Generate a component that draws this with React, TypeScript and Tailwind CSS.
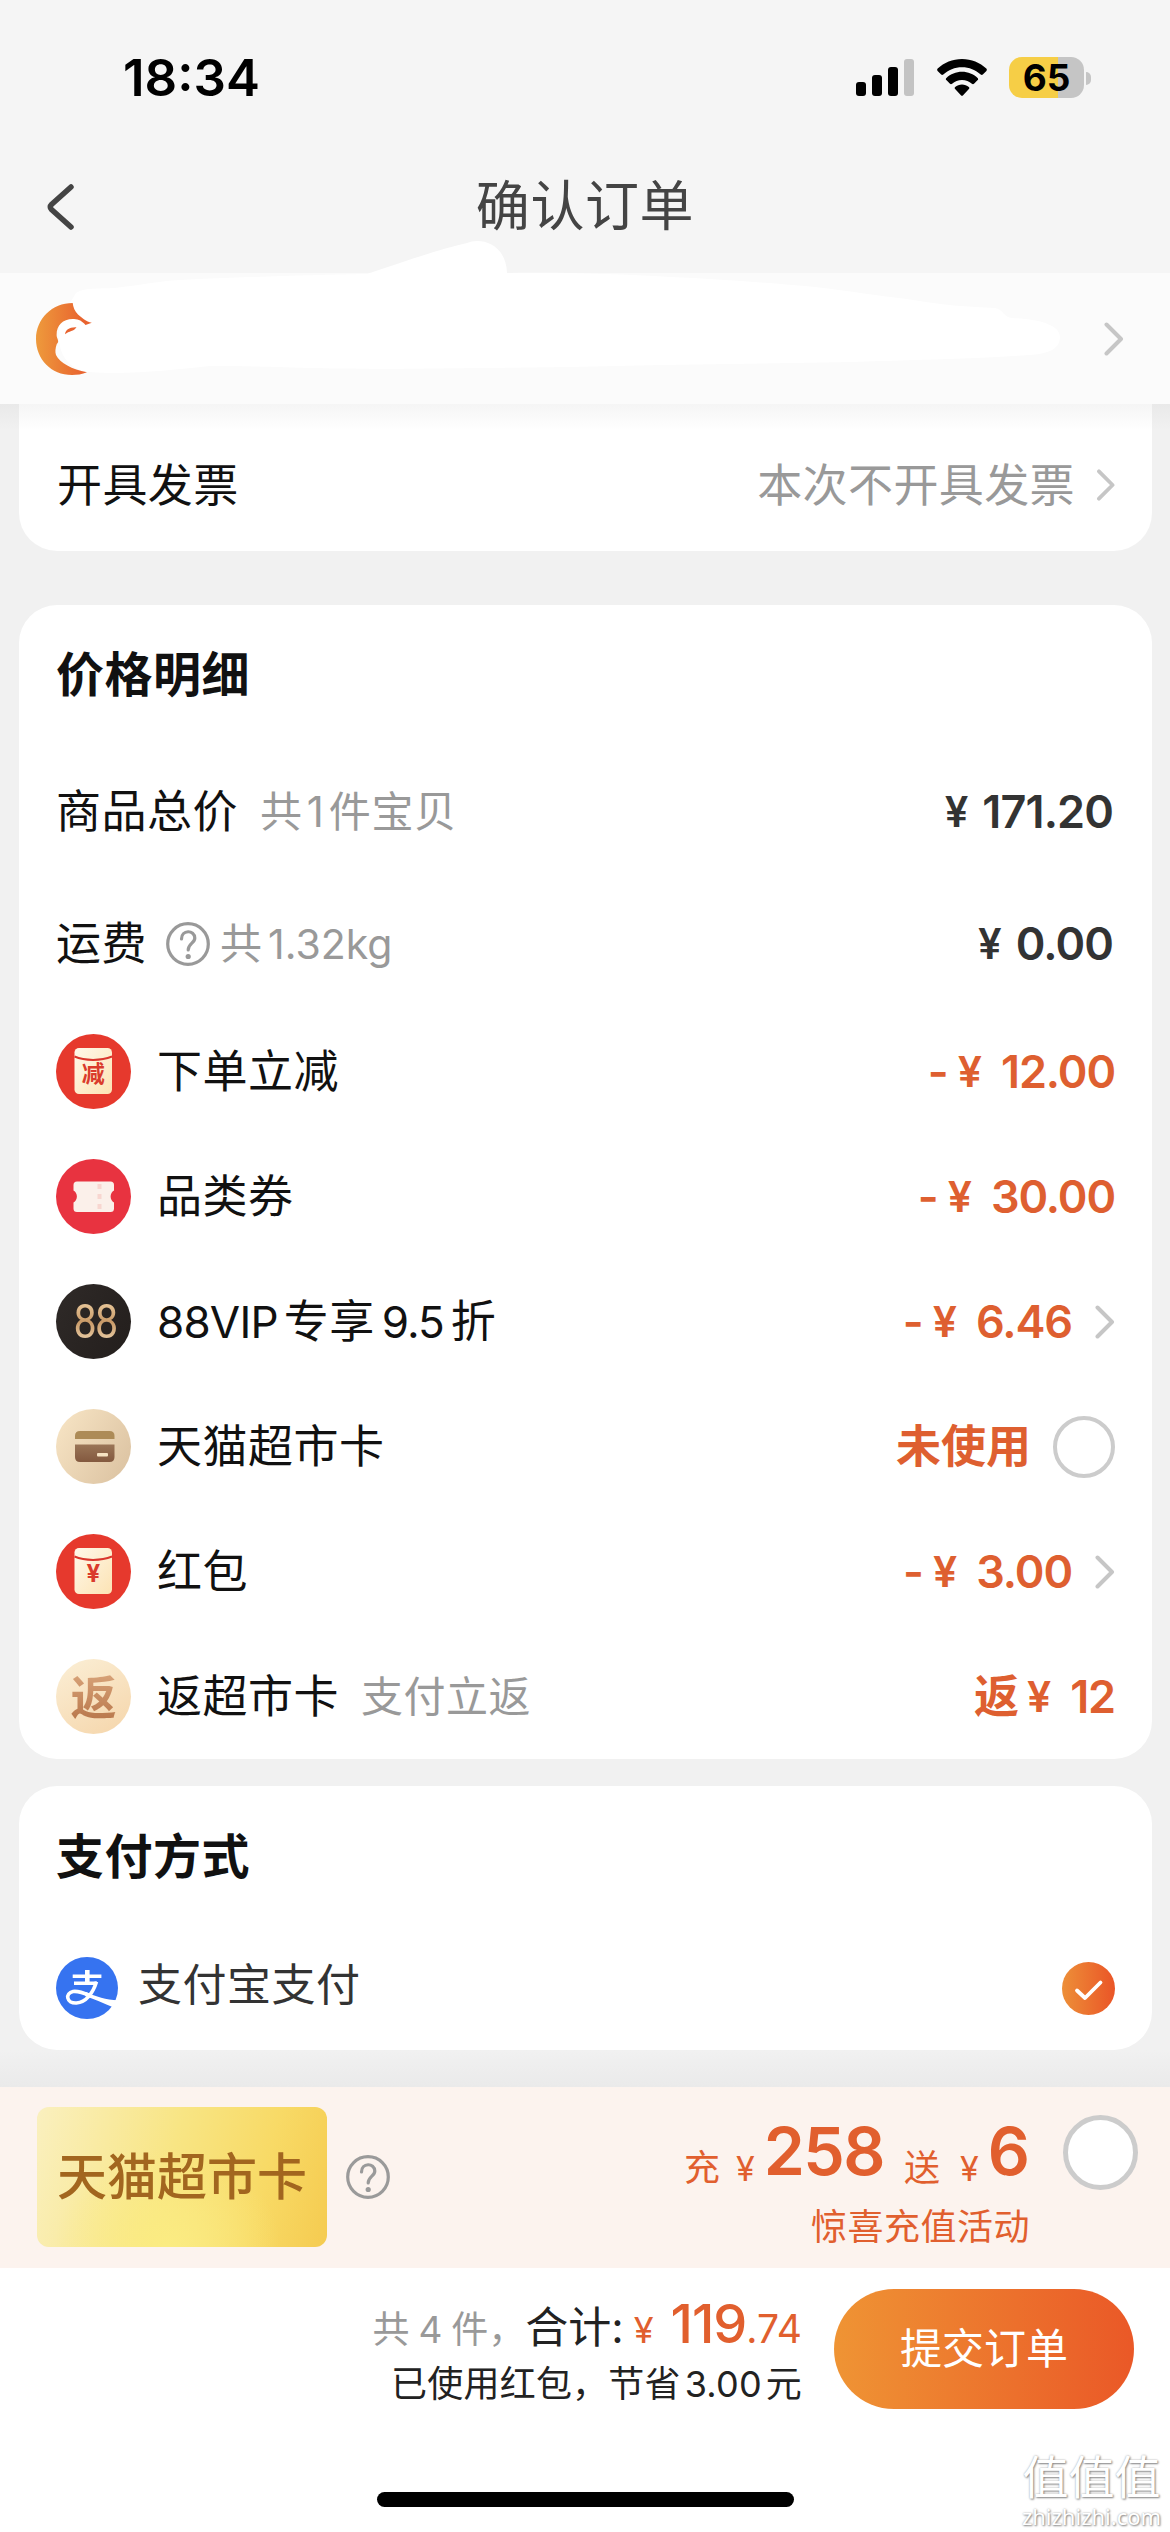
import type { ReactNode } from 'react';

function Chevron({ className = '' }: { className?: string }) {
  return (
    <svg viewBox="0 0 20 34" fill="none" className={className}>
      <path
        d="M2.5 2.5 L17 17 L2.5 31.5"
        stroke="currentColor"
        strokeWidth="4"
        strokeLinecap="round"
        strokeLinejoin="round"
      />
    </svg>
  );
}

function HelpIcon({ className = '' }: { className?: string }) {
  return (
    <svg viewBox="0 0 44 44" fill="none" className={`size-11 ${className}`}>
      <circle cx="22" cy="22" r="20.3" stroke="currentColor" strokeWidth="3.2" />
      <path
        d="M15.5 17 C15.5 7.5 28.5 7.5 28.8 16 C29 21 22.2 21.5 22.2 28"
        stroke="currentColor"
        strokeWidth="3.2"
        strokeLinecap="round"
      />
      <circle cx="22.2" cy="34.5" r="2.6" fill="currentColor" />
    </svg>
  );
}

function StatusBar() {
  return (
    <div className="flex h-[146px] items-start justify-between pt-[50px] pr-[79px] pl-[123px] text-black">
      <span className="mt-px text-[51px] leading-[54px] font-semibold">18:34</span>
      <div className="flex items-start pt-[7px]">
        <svg viewBox="0 0 58 38" className="mt-0.5 h-[38px] w-[58px]">
          <rect x="0" y="23" width="10" height="14" rx="3" />
          <rect x="16" y="16" width="10" height="21" rx="3" />
          <rect x="32" y="8" width="10" height="29" rx="3" />
          <rect x="48" y="0" width="10" height="37" rx="3" fill="#c3c3c3" />
        </svg>
        <svg viewBox="0 0 50 37" className="mt-0.5 ml-[23px] h-[37px] w-[50px]">
          <path d="M25 0 C34.5 0 43 3.6 49.3 9.6 C50 10.3 50 11.2 49.4 11.9 L45.8 15.5 C45.2 16.1 44.4 16.1 43.7 15.5 C38.7 10.9 32.2 8.2 25 8.2 C17.8 8.2 11.3 10.9 6.3 15.5 C5.6 16.1 4.8 16.1 4.2 15.5 L0.6 11.9 C0 11.2 0 10.3 0.7 9.6 C7 3.6 15.5 0 25 0 Z" />
          <path d="M25 12.8 C31 12.8 36.5 15.1 40.6 18.9 C41.3 19.6 41.3 20.4 40.7 21.1 L37 24.7 C36.4 25.3 35.6 25.3 34.9 24.7 C32.3 22.4 28.8 21 25 21 C21.2 21 17.7 22.4 15.1 24.7 C14.4 25.3 13.6 25.3 13 24.7 L9.3 21.1 C8.7 20.4 8.7 19.6 9.4 18.9 C13.5 15.1 19 12.8 25 12.8 Z" />
          <path d="M25 25.4 C27.6 25.4 30 26.4 31.8 28 C32.5 28.6 32.5 29.5 31.9 30.1 L26.1 36.2 C25.5 36.9 24.5 36.9 23.9 36.2 L18.1 30.1 C17.5 29.5 17.5 28.6 18.2 28 C20 26.4 22.4 25.4 25 25.4 Z" />
        </svg>
        <div className="ml-[22px] flex h-[41px] w-[75px] items-center justify-center rounded-[13px] bg-[linear-gradient(90deg,#f6ce46_65%,#c5c5c5_65%)] text-[37px] leading-none font-bold">
          65
        </div>
        <span className="mt-[15px] ml-0.5 h-[13px] w-[5px] rounded-r-full bg-[#c5c5c5]" />
      </div>
    </div>
  );
}

function AddressBar() {
  return (
    <div className="relative flex h-[131px] items-center justify-between bg-[#fbfbfb] pr-[46px] pl-9">
      <svg viewBox="0 0 72 72" className="relative z-10 size-[72px]">
        <defs>
          <linearGradient id="logo" x1="0" y1="0" x2="1" y2="0">
            <stop offset="0" stopColor="#ee9a3c" />
            <stop offset="0.85" stopColor="#e8632f" />
          </linearGradient>
        </defs>
        <path
          d="M36.7 0 C37 4 39 8.5 42 11.5 C46 15 50 18.5 55.8 19.7 L49.5 22 C46 18 43 16.3 38 16 C27 15.5 20.5 22 20.6 32 C20.7 36 24 38 20.8 41 C19.3 45 19 49 20 52 C24 60 36 66.5 51 69.3 C46 71.5 41 72 36 72 C15 72 0 56 0 36 C0 16 16 0 36.7 0 Z"
          fill="url(#logo)"
        />
        <path d="M29 31.3 C29.5 27 33 24 40.5 24.3 C38 28.5 33 28 29 31.3 Z" fill="#e8632f" />
      </svg>
      {/* blanked-out address */}
      <svg viewBox="0 0 1170 164" className="absolute -top-[34px] left-0 h-[164px] w-[1170px]">
        <path
          d="M76 54 C85 48 100 50 115 49 C140 46 160 42 180 41 C240 38 310 36 367 35 C400 24 440 10 467 4 C480 -2 506 4 507 34 C560 33 620 35 670 38 C720 40 770 44 815 48 C850 52 880 57 907 60 C940 66 970 68 995 69 C1003 70 1004 79 1012 79 C1040 80 1060 86 1060 98 C1060 110 1048 115 1029 116 C970 120 910 121 853 123 L662 126 L570 128 L383 130 C320 130 260 127 210 127 C170 131 130 136 88 133 C60 128 56 104 60 80 Z"
          fill="#fff"
        />
      </svg>
      <Chevron className="h-[36px] w-[20px] text-[#c6c6c6]" />
    </div>
  );
}

function Envelope({ mark, size }: { mark: string; size: number }) {
  return (
    <svg viewBox="0 0 75 75" className="size-[75px]">
      <defs>
        <linearGradient id="paper" x1="0" y1="0" x2="1" y2="1">
          <stop offset="0" stopColor="#fff8ea" />
          <stop offset="1" stopColor="#fce3b4" />
        </linearGradient>
      </defs>
      <circle cx="37.5" cy="37.5" r="37.5" fill="#e6392d" />
      <rect x="18.5" y="14" width="37.5" height="46" rx="4.5" fill="url(#paper)" />
      <path d="M18.5 22.5 C29 27 45 27 56 22.5" stroke="#d9352c" strokeWidth="2" fill="none" />
      <text x="37.3" y={39 + size * 0.38} textAnchor="middle" fontSize={size} fontWeight="700" fill="#da3b2c">
        {mark}
      </text>
    </svg>
  );
}

function TicketIcon() {
  return (
    <svg viewBox="0 0 75 75" className="size-[75px]">
      <circle cx="37.5" cy="37.5" r="37.5" fill="#e83340" />
      <path
        d="M21 22.5 H54.5 Q58 22.5 58 26 V31.5 A7 7 0 0 0 58 43.5 V49.5 Q58 53 54.5 53 H21 Q17.5 53 17.5 49.5 V43.5 A7 7 0 0 0 17.5 31.5 V26 Q17.5 22.5 21 22.5 Z"
        fill="#fbf0ea"
      />
      <path d="M43.5 25 V52" stroke="#f8d6d0" strokeWidth="4" strokeDasharray="5 5" />
    </svg>
  );
}

function CardIcon() {
  return (
    <svg viewBox="0 0 75 75" className="size-[75px]">
      <defs>
        <linearGradient id="sand" x1="0" y1="0.2" x2="1" y2="0.8">
          <stop offset="0" stopColor="#f6e3c3" />
          <stop offset="1" stopColor="#dcc3a2" />
        </linearGradient>
        <linearGradient id="cocoa" x1="0" y1="0" x2="0" y2="1">
          <stop offset="0" stopColor="#9a7557" />
          <stop offset="1" stopColor="#83593f" />
        </linearGradient>
      </defs>
      <circle cx="37.5" cy="37.5" r="37.5" fill="url(#sand)" />
      <path d="M19 30 V27 Q19 22 24 22 H53.5 Q58.5 22 58.5 27 V30 Z" fill="#ad8b57" />
      <path d="M19 35.5 H58.5 V48 Q58.5 53 53.5 53 H24 Q19 53 19 48 Z" fill="url(#cocoa)" />
      <rect x="41" y="44" width="11" height="3.5" rx="1" fill="#f6e3c3" />
    </svg>
  );
}

function AlipayIcon() {
  return (
    <svg viewBox="0 0 62 62" fill="none" className="size-[62px]">
      <circle cx="31" cy="31" r="31" fill="#3673f0" />
      <path d="M16.7 19.3 H45.4 M18 26.3 H41" stroke="#fff" strokeWidth="3.6" />
      <path d="M31.3 13 V26" stroke="#fff" strokeWidth="4.6" />
      <path
        d="M40.5 24.8 C37 36 30 45.5 20.5 46 C10 46.5 9 36 17 34.5 C22 33.5 28 36 34 38.5"
        stroke="#fff"
        strokeWidth="3.6"
      />
      <path d="M30 35 C40 39.5 50 43 62 43.3 L62 46 L56.5 50 C48 46.5 38 42 29 39 Z" fill="#fff" />
    </svg>
  );
}

function Price({ children }: { children: ReactNode }) {
  return (
    <span className="ml-auto flex items-center text-[45px] leading-none font-semibold text-[#333]">
      <span className="mr-[14px] text-[42px]">¥</span>
      <span className="tracking-[-0.9px]">{children}</span>
    </span>
  );
}

function Amount({ children, prefix }: { children: ReactNode; prefix?: string }) {
  return (
    <span className="flex items-center text-[45px] leading-none font-semibold text-[#de5f30]">
      {prefix === '-' && <span className="mr-[9px]">-</span>}
      {prefix && prefix !== '-' && <span className="mr-2">{prefix}</span>}
      <span className="mr-[19px] text-[43px]">¥</span>
      <span className="tracking-[-1.1px]">{children}</span>
    </span>
  );
}

function Row({ icon, label, note, children }: { icon: ReactNode; label: ReactNode; note?: string; children: ReactNode }) {
  return (
    <div className="flex h-[125px] items-center">
      {icon}
      <span className="ml-[26px] text-[45px] tracking-[0.5px] text-[#111]">{label}</span>
      {note && <span className="ml-[22px] text-[42px] tracking-[0.5px] text-[#999]">{note}</span>}
      <div className="ml-auto flex items-center">{children}</div>
    </div>
  );
}

export default function App() {
  return (
    <div className="relative flex h-[2532px] w-[1170px] flex-col overflow-hidden bg-[#f1f1f1] font-['Inter','Noto_Sans_CJK_SC',sans-serif] leading-none">
      <header className="h-[273px] shrink-0 bg-[#f5f5f5]">
        <StatusBar />
        <div className="flex h-[122px] items-center pr-[74px] pl-[46px]">
          <svg viewBox="0 0 28 46" fill="none" className="h-[46px] w-[28px]">
            <path d="M25 3 L5.5 20.5 Q3 23 5.5 25.5 L25 43" stroke="#444" strokeWidth="5.5" strokeLinecap="round" />
          </svg>
          <h1 className="flex-1 text-center text-[54px] tracking-[0.6px] text-[#444]">确认订单</h1>
        </div>
      </header>

      <AddressBar />

      <main className="flex flex-col bg-[linear-gradient(180deg,#e9e9e9_0px,#f1f1f1_26px)] pr-[18px] pl-[19px]">
        <section className="flex h-[147px] items-center rounded-b-[38px] bg-[linear-gradient(180deg,#f5f5f5_0px,#fff_26px)] pt-[15px] pr-[36px] pl-[38px] text-[45px] tracking-[0.4px]">
          <span className="text-[#111]">开具发票</span>
          <span className="ml-auto text-[#999]">本次不开具发票</span>
          <Chevron className="ml-[21px] h-[32px] w-[20px] text-[#c6c6c6]" />
        </section>

        <section className="mt-[54px] h-[1154px] rounded-[38px] bg-white px-[37px]">
          <h2 className="flex h-[140px] items-center text-[48px] font-bold tracking-[0.5px] text-[#111]">价格明细</h2>
          <div className="flex h-[133px] items-center pr-0.5">
            <span className="text-[45px] tracking-[0.5px] text-[#111]">商品总价</span>
            <span className="ml-[22px] text-[42px] tracking-[0.8px] text-[#999]">
              共<span className="mx-1">1</span>件宝贝
            </span>
            <Price>171.20</Price>
          </div>
          <div className="flex h-[131px] items-center pr-0.5">
            <span className="text-[45px] tracking-[0.5px] text-[#111]">运费</span>
            <HelpIcon className="ml-[19px] text-[#999]" />
            <span className="ml-2.5 text-[42px] text-[#999]">
              共<span className="ml-1.5 text-[41px]">1.32kg</span>
            </span>
            <Price>0.00</Price>
          </div>

          <Row icon={<Envelope mark="减" size={23} />} label="下单立减">
            <Amount prefix="-">12.00</Amount>
          </Row>
          <Row icon={<TicketIcon />} label="品类券">
            <Amount prefix="-">30.00</Amount>
          </Row>
          <Row
            icon={
              <div className="flex size-[75px] items-center justify-center rounded-full bg-[linear-gradient(120deg,#2f2a28,#231e1c)] font-['Roboto'] text-[48px] tracking-[-2px]">
                <span className="-mr-0.5 inline-block scale-x-[0.86] bg-[linear-gradient(180deg,#f0d2a6,#c99a68_50%,#f3dcb8)] bg-clip-text text-transparent">
                  88
                </span>
              </div>
            }
            label={
              <>
                <span className="mr-1.5 text-[44px] tracking-[-0.8px]">88VIP</span>专享
                <span className="mx-[7px] text-[44px] tracking-[-1px]">9.5</span>折
              </>
            }
          >
            <Amount prefix="-">6.46</Amount>
            <Chevron className="ml-[23px] h-[34px] w-[20px] text-[#c6c6c6]" />
          </Row>
          <Row icon={<CardIcon />} label="天猫超市卡">
            <span className="mr-[22px] text-[45px] font-bold text-[#de5f30]">未使用</span>
            <span className="size-[62px] rounded-full border-4 border-[#ccc]" />
          </Row>
          <Row icon={<Envelope mark="¥" size={24} />} label="红包">
            <Amount prefix="-">3.00</Amount>
            <Chevron className="ml-[23px] h-[34px] w-[20px] text-[#c6c6c6]" />
          </Row>
          <Row
            icon={
              <div className="flex size-[75px] items-center justify-center rounded-full bg-[linear-gradient(150deg,#fbefd6,#f5d5aa)] text-[46px] font-bold">
                <span className="bg-[linear-gradient(180deg,#d7a278,#b9784c)] bg-clip-text text-transparent">返</span>
              </div>
            }
            label="返超市卡"
            note="支付立返"
          >
            <Amount prefix="返">12</Amount>
          </Row>
        </section>

        <section className="mt-[27px] h-[264px] rounded-[38px] bg-white px-[37px]">
          <h2 className="flex h-[141px] items-center text-[48px] font-bold tracking-[0.5px] text-[#111]">支付方式</h2>
          <div className="flex h-[123px] items-start pt-[30px]">
            <AlipayIcon />
            <span className="mt-1.5 ml-5 text-[44px] tracking-[0.5px] text-[#333]">支付宝支付</span>
            <svg viewBox="0 0 53 53" fill="none" className="mt-[5px] ml-auto size-[53px]">
              <defs>
                <linearGradient id="tick" x1="0" y1="0" x2="1" y2="0">
                  <stop offset="0" stopColor="#ed8f38" />
                  <stop offset="1" stopColor="#ea5527" />
                </linearGradient>
              </defs>
              <circle cx="26.5" cy="26.5" r="26.5" fill="url(#tick)" />
              <path d="M15 28.5 L23 36 L38.5 20.5" stroke="#fff" strokeWidth="3.8" strokeLinecap="round" strokeLinejoin="round" />
            </svg>
          </div>
        </section>
        <div className="-mr-[18px] -ml-[19px] h-[37px] bg-[linear-gradient(180deg,#f1f1f1,#eaeaea)]" />
      </main>

      <section className="flex h-[181px] shrink-0 bg-[#fcf3ee] pr-8 pl-[37px]">
        <div className="mt-5 flex h-[140px] w-[290px] items-center justify-center rounded-[12px] bg-[radial-gradient(ellipse_at_45%_100%,#fbec82_0%,#fbec8200_50%),linear-gradient(105deg,#faf0bf_0%,#f8e584_45%,#f8da66_75%,#f5cb50_100%)] text-[50px] font-medium text-[#a2661f]">
          天猫超市卡
        </div>
        <HelpIcon className="mt-[68px] ml-[19px] text-[#9a9a9a]" />
        <div className="mt-[31px] ml-auto flex flex-col items-end text-[#e15f2e]">
          {/* big numbers sit a little above the baseline of the small text */}
          <div className="flex items-end text-[36px]">
            <span>充</span>
            <span className="ml-4 text-[34px]">¥</span>
            <span className="mb-0.5 ml-[9px] text-[66px] font-semibold tracking-[-1.5px]">258</span>
            <span className="ml-5">送</span>
            <span className="ml-5 text-[34px]">¥</span>
            <span className="mb-0.5 ml-[9px] text-[66px] font-semibold">6</span>
          </div>
          <p className="mt-[23px] text-[36px] tracking-[0.5px]">惊喜充值活动</p>
        </div>
        <span className="mt-[28px] ml-[33px] size-[75px] rounded-full border-[5px] border-[#ccc] bg-white" />
      </section>

      <footer className="flex flex-1 flex-col bg-white">
        <div className="flex justify-end pt-[21px] pr-9">
          <div className="flex flex-col items-end pt-2">
            <div className="flex items-baseline whitespace-nowrap">
              <span className="text-[37px] text-[#999]">
                共<span className="mx-[9px]">4</span>件，
              </span>
              <span className="text-[43px] text-[#222]">合计:</span>
              <span className="ml-2.5 text-[36px] text-[#e15f2e]">¥</span>
              <span className="ml-[17px] text-[54px] font-medium tracking-[-1px] text-[#e15f2e]">119</span>
              <span className="text-[39px] text-[#e15f2e]">.74</span>
            </div>
            <p className="mt-[15px] text-[36px] tracking-[0.2px] text-[#222]">
              已使用红包，节省<span className="mx-1">3.00</span>元
            </p>
          </div>
          <button className="ml-8 h-[120px] w-[300px] rounded-full bg-[linear-gradient(90deg,#ef9434,#ea5827)] text-[42px] text-white">
            提交订单
          </button>
        </div>
        <div className="mt-auto mb-[25px] ml-[377px] h-[15px] w-[417px] rounded-full bg-black" />
      </footer>

      <div className="absolute right-[8px] bottom-[4px] flex w-[141px] flex-col items-center text-white [text-shadow:1px_1px_2px_#888,0_0_2px_#aaa]">
        <span className="text-[46px] leading-[54px]">值值值</span>
        <span className="font-['Noto_Sans'] text-[22px] leading-[24px]">zhizhizhi.com</span>
      </div>
    </div>
  );
}
